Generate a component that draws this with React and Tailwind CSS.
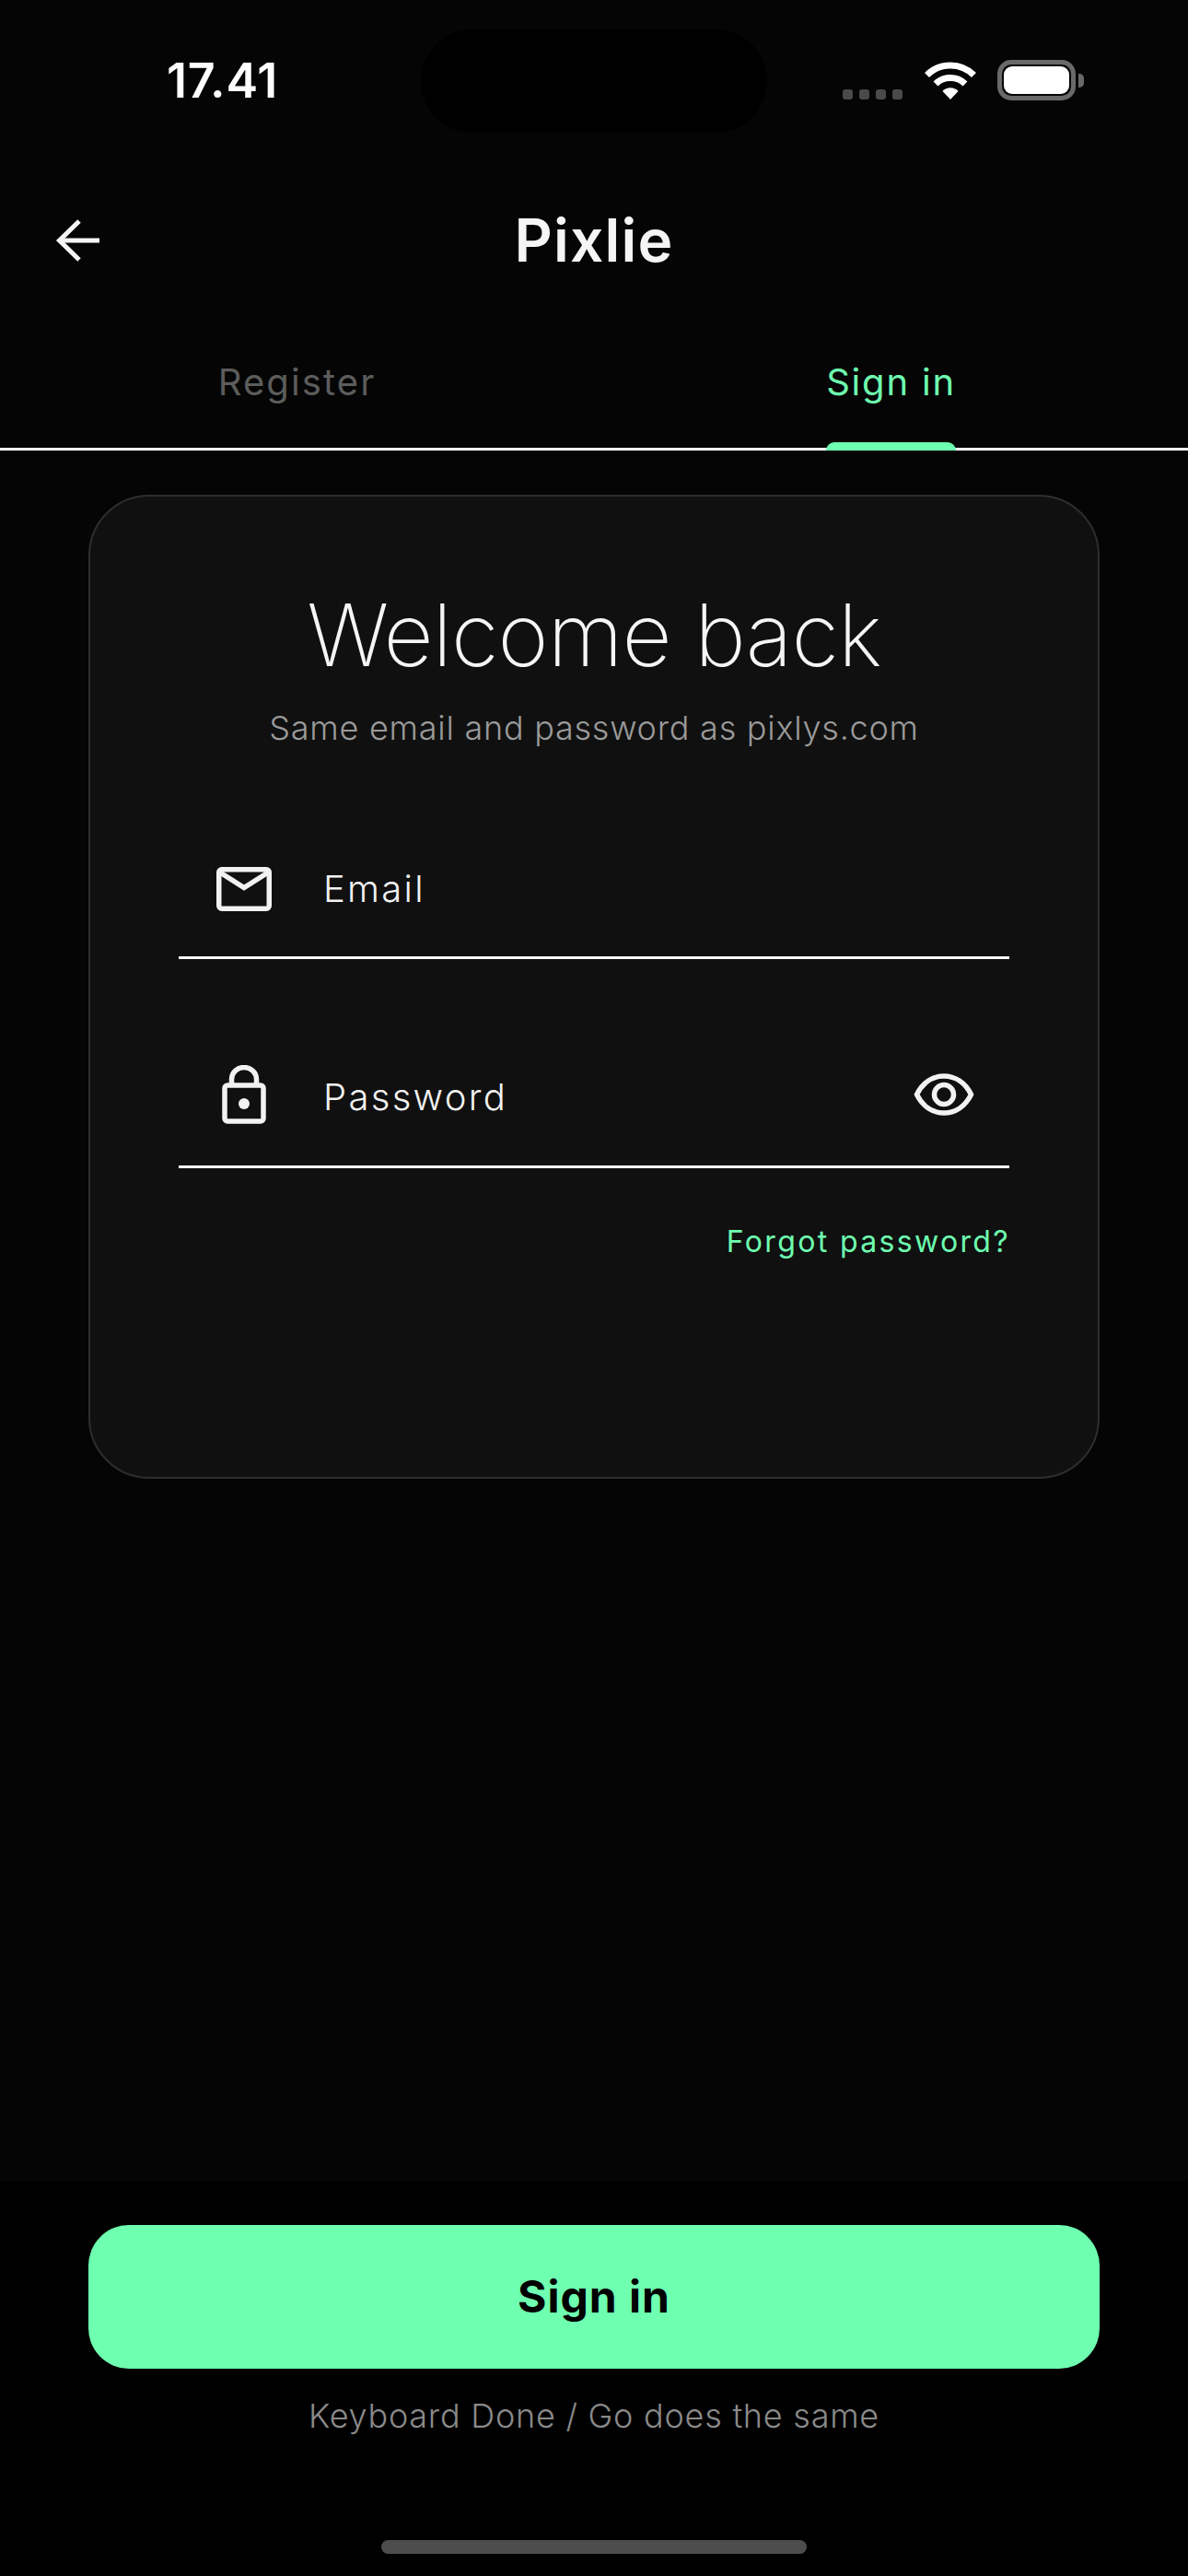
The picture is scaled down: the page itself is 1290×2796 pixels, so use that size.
import React from "react";

function Wifi() {
  return (
    <svg width="58" height="42" viewBox="0 0 58 42" className="block">
      <path d="M3.5 15.5 A36 36 0 0 1 54.5 15.5" fill="none" stroke="#fff" strokeWidth="7" />
      <path d="M13 25 A23 23 0 0 1 45 25" fill="none" stroke="#fff" strokeWidth="7" />
      <path d="M20.5 33 A11.5 11.5 0 0 1 37.5 33 L29 42 Z" fill="#fff" />
    </svg>
  );
}

function Battery() {
  return (
    <div className="flex items-center gap-[3px]">
      <div className="w-[85px] h-[44px] rounded-[15px] border-[5px] border-[#696969] p-[2px]">
        <div className="w-full h-full rounded-[9px] bg-white" />
      </div>
      <div className="w-[6px] h-[15px] rounded-r-[5px] bg-[#696969]" />
    </div>
  );
}

function Mail() {
  return (
    <svg width="60" height="48" viewBox="0 0 60 48" fill="none" stroke="#f2f2f2" strokeWidth="5.5" className="block">
      <rect x="2.75" y="2.75" width="54.5" height="42.5" rx="3" />
      <path d="M4 6 L30 22.5 L56 6" strokeLinejoin="miter" />
    </svg>
  );
}

function Lock() {
  return (
    <svg width="48" height="64" viewBox="0 0 48 64" fill="none" stroke="#f2f2f2" strokeWidth="5.5" className="block">
      <rect x="3" y="22" width="42" height="39" rx="3" />
      <path d="M10.5 22 V15.5 A13.5 13 0 0 1 37.5 15.5 V22" />
      <circle cx="24" cy="42" r="6" fill="#f2f2f2" stroke="none" />
    </svg>
  );
}

function Eye() {
  return (
    <svg width="66" height="46" viewBox="0 0 66 46" fill="none" stroke="#f2f2f2" strokeWidth="5.5" className="block">
      <path d="M3.5 23 C10 10 21 3 33 3 C45 3 56 10 62.5 23 C56 36 45 43 33 43 C21 43 10 36 3.5 23 Z" strokeLinejoin="round" />
      <circle cx="33" cy="23" r="10.5" />
    </svg>
  );
}

function ArrowLeft() {
  return (
    <svg width="48" height="48" viewBox="0 0 48 48" fill="none" stroke="#f5f5f5" strokeWidth="5" className="block">
      <path d="M48 24 H4" />
      <path d="M26 3 L4.5 24 L26 45" />
    </svg>
  );
}

export default function App() {
  return (
    <div
      className="relative w-[1290px] h-[2796px] flex flex-col bg-black text-white overflow-hidden"
      style={{ fontFamily: "Inter, 'Noto Sans', sans-serif" }}
    >
      <div className="absolute left-[457px] top-[32px] w-[376px] h-[112px] rounded-[56px] bg-black" />
      <div className="flex-1 flex flex-col bg-[#050505]">
        <div className="h-[176px] flex items-start justify-between pl-[181px] pr-[113px]">
          <div className="mt-[56px] text-[52px] leading-[64px] font-semibold tracking-[0.8px] relative">17.41</div>
          <div className="relative flex items-end mt-[65px] h-[44px]">
            <div className="flex gap-[7px] mr-[23px] mb-[1px]">
              <div className="w-[11px] h-[11px] rounded-[3px] bg-[#4a4a4a]" />
              <div className="w-[11px] h-[11px] rounded-[3px] bg-[#4a4a4a]" />
              <div className="w-[11px] h-[11px] rounded-[3px] bg-[#4a4a4a]" />
              <div className="w-[11px] h-[11px] rounded-[3px] bg-[#4a4a4a]" />
            </div>
            <div className="mr-[22px] mb-[1px]"><Wifi /></div>
            <Battery />
          </div>
        </div>

        <div className="relative h-[172px] flex items-center justify-center">
          <div className="absolute left-[60px] top-[61px]"><ArrowLeft /></div>
          <div className="text-[64px] leading-[80px] font-semibold text-[#f5f5f5] tracking-[1.2px] mb-[2px]">Pixlie</div>
        </div>

        <div className="h-[141px] border-b-[3px] border-white grid grid-cols-2">
          <div className="flex justify-center pt-[43px]">
            <span className="text-[40px] leading-[48px] text-[#5c5c5c] tracking-[2.1px]">Register</span>
          </div>
          <div className="flex justify-center pt-[43px]">
            <div className="relative h-[138px]">
              <span className="block text-[40px] leading-[48px] text-[#6effb0] tracking-[1.8px]">Sign in</span>
              <div className="absolute left-0 right-0 top-[89px] h-[9px] rounded-t-[9px] bg-[#6effb0]" />
            </div>
          </div>
        </div>

        <div className="mx-[96px] mt-[48px] h-[1068px] rounded-[66px] border-2 border-[#2e2e2e] bg-[#101010] px-[96px] flex flex-col">
          <h1 className="mt-[92px] text-center text-[94px] leading-[116px] font-[250] text-[#f5f5f5] tracking-[-0.9px]">Welcome back</h1>
          <p className="mt-[21px] text-center text-[36px] leading-[44px] font-light text-[#9a9a9a] tracking-[0.75px]">Same email and password as pixlys.com</p>

          <div className="mt-[101px] h-[128px] border-b-[3px] border-white flex items-center pb-[21px] pl-[41px]">
            <div className="w-[60px] flex justify-center"><Mail /></div>
            <span className="ml-[56px] text-[40px] leading-[48px] font-light text-[#f2f2f2] tracking-[2.3px]">Email</span>
          </div>

          <div className="mt-[99px] h-[128px] border-b-[3px] border-white flex items-center pb-[21px] pl-[41px] pr-[38px]">
            <div className="w-[60px] flex justify-center mb-[9px]"><Lock /></div>
            <span className="ml-[56px] mb-[3px] flex-1 text-[40px] leading-[48px] font-light text-[#f2f2f2] tracking-[2.3px]">Password</span>
            <div className="mb-[9px]"><Eye /></div>
          </div>

          <div className="mt-[60px] -mr-[1px] text-right text-[32px] leading-[40px] text-[#6effb0] tracking-[2.35px]">Forgot password?</div>
        </div>
      </div>

      <div className="h-[429px] bg-black px-[96px] flex flex-col items-stretch">
        <div className="mt-[48px] h-[156px] rounded-[44px] bg-[#6effb0] flex items-center justify-center text-[48px] font-bold text-black tracking-[1px]">Sign in</div>
        <p className="mt-[29px] text-center text-[36px] leading-[44px] font-light text-[#8a8a8a] tracking-[0.75px]">Keyboard Done / Go does the same</p>
        <div className="mt-[113px] self-center w-[462px] h-[15px] rounded-[8px] bg-[#4d4d4d]" />
      </div>
    </div>
  );
}
